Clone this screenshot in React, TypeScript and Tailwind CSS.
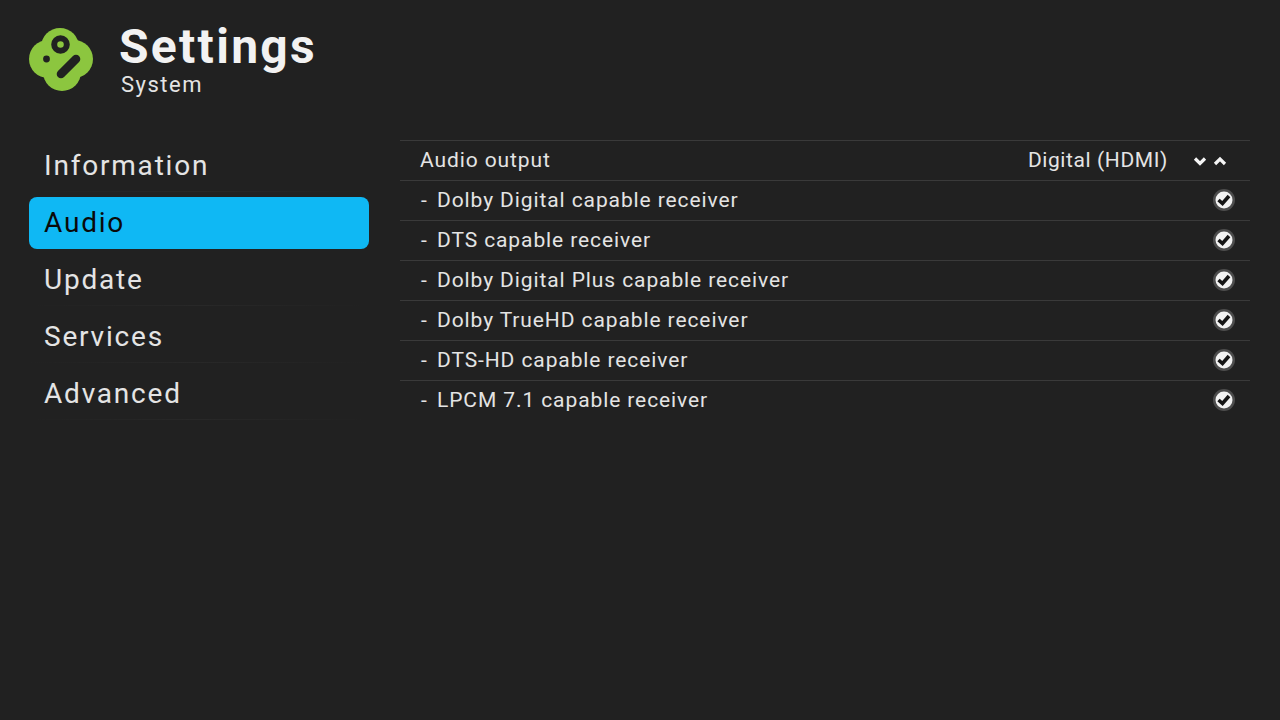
import React from 'react';

const menu = ['Information', 'Audio', 'Update', 'Services', 'Advanced'];

const rows = [
  'Dolby Digital capable receiver',
  'DTS capable receiver',
  'Dolby Digital Plus capable receiver',
  'Dolby TrueHD capable receiver',
  'DTS-HD capable receiver',
  'LPCM 7.1 capable receiver',
];

function Logo() {
  return (
    <svg width="64" height="64" viewBox="0 0 64 64" className="shrink-0">
      <circle cx="31" cy="20" r="19" fill="#8cc63f" />
      <circle cx="19" cy="32" r="19" fill="#8cc63f" />
      <circle cx="45" cy="32" r="19" fill="#8cc63f" />
      <circle cx="33" cy="45" r="19" fill="#8cc63f" />
      <circle cx="31.5" cy="17.5" r="6.3" fill="none" stroke="#212121" strokeWidth="6" />
      <circle cx="17.5" cy="32" r="3.4" fill="#212121" />
      <line x1="32" y1="47" x2="47" y2="32" stroke="#212121" strokeWidth="8.6" strokeLinecap="round" />
    </svg>
  );
}

function Check() {
  return (
    <svg width="22" height="22" viewBox="0 0 22 22">
      <circle cx="11" cy="11" r="11" fill="#4d4d4d" />
      <circle cx="11" cy="11" r="8.5" fill="#f2f2f2" />
      <path d="M5.5 11 L9.5 14.5 L16 7" fill="none" stroke="#151515" strokeWidth="3.6" />
    </svg>
  );
}

function Chevron({ up }: { up?: boolean }) {
  return (
    <svg width="14" height="10" viewBox="0 0 14 10">
      <path d={up ? 'M2 8 L7 3 L12 8' : 'M2 2.5 L7 7.5 L12 2.5'} fill="none" stroke="#f5f5f5" strokeWidth="3.2" />
    </svg>
  );
}

export default function App() {
  return (
    <div className="w-[1280px] h-[720px] overflow-hidden bg-[#212121] text-[#e4e4e4] font-['Roboto',sans-serif]">
      <header className="h-[140px] pl-[29px] pt-[27px] flex items-start">
        <Logo />
        <div className="ml-[26px] -mt-[5px]">
          <h1 className="text-[48px] leading-[50px] font-bold tracking-[2.3px] text-[#f2f2f2]">Settings</h1>
          <p className="text-[22px] leading-[20px] tracking-[1.5px] ml-[2px] mt-[3px]">System</p>
        </div>
      </header>
      <div className="flex">
        <nav className="w-[340px] ml-[29px] flex flex-col gap-[5px]">
          {menu.map((m) => (
            <div
              key={m}
              className={
                m === 'Audio'
                  ? 'h-[52px] rounded-lg bg-[#0fb8f4] text-[#0a0a0a] text-[28px] tracking-[1.8px] flex flex-col'
                  : 'h-[52px] text-[28px] tracking-[1.8px] flex flex-col'
              }
            >
              <span className="flex-1 pl-[15px] flex items-center">{m}</span>
              {m !== 'Audio' && <div className="h-px bg-gradient-to-r from-transparent via-[#282828] via-50% to-transparent" />}
            </div>
          ))}
        </nav>
        <main className="w-[850px] ml-[31px]">
          <div className="h-[40px] border-t border-[#3a3a3a] pl-[20px] pr-[23px] flex items-center text-[21px] tracking-[0.9px]">
            <span>Audio output</span>
            <span className="ml-auto tracking-[0.6px]">Digital (HDMI)</span>
            <span className="ml-[25px] flex gap-[6px]">
              <Chevron />
              <Chevron up />
            </span>
          </div>
          {rows.map((r) => (
            <div key={r} className="h-[40px] border-t border-[#3a3a3a] pl-[20px] pr-[15px] flex items-center justify-between text-[21px] tracking-[0.9px]">
              <span className="flex">
                <span className="w-[17px] pl-[1px]">-</span>
                {r}
              </span>
              <span className="-mt-[2px]">
                <Check />
              </span>
            </div>
          ))}
        </main>
      </div>
    </div>
  );
}
